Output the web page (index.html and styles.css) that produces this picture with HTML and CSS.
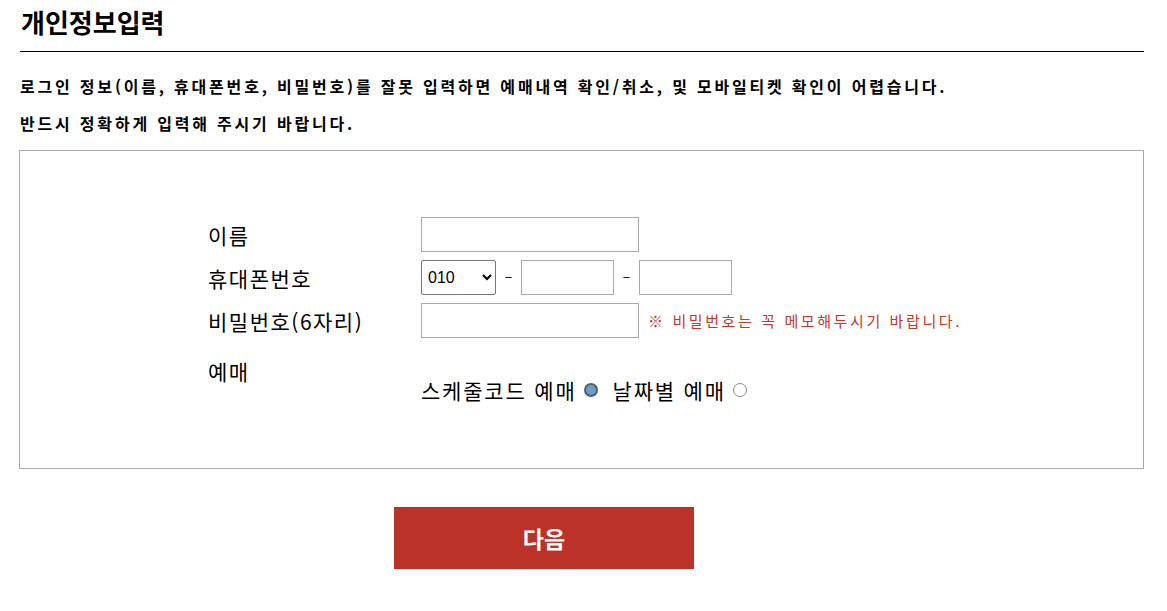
FILE: index.html
```html
<!DOCTYPE html>
<html lang="ko">
<head>
<meta charset="utf-8">
<title>개인정보입력</title>
<link rel="stylesheet" href="styles.css">
</head>
<body>
<div class="wrap">
  <h1 class="title">개인정보입력</h1>
  <div class="info">
    <p>로그인 정보(이름, 휴대폰번호, 비밀번호)를 잘못 입력하면 예매내역 확인/취소, 및 모바일티켓 확인이 어렵습니다.</p>
    <p>반드시 정확하게 입력해 주시기 바랍니다.</p>
  </div>
  <div class="formbox">
    <div class="row">
      <div class="label">이름</div>
      <div class="field"><input class="txt wide" type="text"></div>
    </div>
    <div class="row">
      <div class="label">휴대폰번호</div>
      <div class="field">
        <select class="sel"><option>010</option><option>011</option><option>016</option><option>017</option><option>018</option><option>019</option></select>
        <span class="dash">–</span>
        <input class="txt short" type="text">
        <span class="dash">–</span>
        <input class="txt short" type="text">
      </div>
    </div>
    <div class="row">
      <div class="label">비밀번호(6자리)</div>
      <div class="field"><input class="txt wide" type="password"><span class="note">※ 비밀번호는 꼭 메모해두시기 바랍니다.</span></div>
    </div>
    <div class="row row-radio">
      <div class="label">예매</div>
      <div class="field radios">
        <label class="opt">스케줄코드 예매<input class="radio" type="radio" name="mode" checked></label>
        <label class="opt">날짜별 예매<input class="radio" type="radio" name="mode"></label>
      </div>
    </div>
  </div>
  <div class="actions"><button class="next" type="button">다음</button></div>
</div>
</body>
</html>
```

FILE: styles.css
```css
body {
  margin: 0;
  font-family: "Noto Sans CJK KR", "Noto Sans", sans-serif;
  color: #000;
  background: #fff;
}
.wrap {
  margin-left: 19px;
  width: 1125px;
}
.title {
  margin: 0 0 0 1px;
  padding: 6px 1px 14px;
  font-size: 26px;
  line-height: 31px;
  font-weight: 700;
  border-bottom: 1px solid #000;
}
.info {
  margin-top: 16px;
  margin-bottom: 8px;
  padding-left: 1px;
}
.info p {
  margin: 0;
  font-size: 16px;
  line-height: 37px;
  font-weight: 700;
  letter-spacing: 2.8px;
}
.formbox {
  border: 1px solid #aaa;
  padding-top: 66px;
  box-sizing: border-box;
  height: 319px;
}
.row {
  display: flex;
  align-items: center;
  height: 35px;
  margin-bottom: 8px;
  padding-left: 188px;
}
.label {
  width: 213px;
  font-size: 21px;
  letter-spacing: 1.5px;
  line-height: 24px;
}
.field {
  display: flex;
  align-items: center;
}
.txt {
  border: 1px solid #a9a9a9;
  height: 35px;
  box-sizing: border-box;
  padding: 0 6px;
  font-size: 16px;
  outline: none;
  margin: 0;
}
.wide { width: 218px; }
.short { width: 93px; }
.sel {
  width: 75px;
  height: 35px;
  box-sizing: border-box;
  font-size: 16px;
  font-family: "Liberation Sans", sans-serif;
  border: 1px solid #767676;
  border-radius: 2px;
  background: #fff;
  padding: 0 2px;
  margin: 0;
  color: #000;
}
.dash {
  width: 25px;
  text-align: center;
  font-size: 14px;
  margin-top: -6px;
}
.note {
  margin-left: 9px;
  color: #c0392b;
  font-size: 15px;
  letter-spacing: 2.6px;
}
.row-radio {
  align-items: flex-start;
  height: auto;
  margin-top: 21px;
}
.radios {
  padding-top: 19px;
}
.opt {
  display: inline-flex;
  align-items: center;
  font-size: 21px;
  line-height: 24px;
  letter-spacing: 1.8px;
  margin-right: 15px;
}
.radio {
  appearance: none;
  -webkit-appearance: none;
  width: 14px;
  height: 14px;
  margin: 0 0 0 7px;
  border-radius: 50%;
  border: 1px solid #8a8a8a;
  background: #fff;
  box-sizing: border-box;
}
.radio:checked {
  border: 2px solid #4f5f6c;
  background: #6c9dc6;
}
.actions {
  margin-top: 38px;
  padding-left: 375px;
}
.next {
  width: 300px;
  height: 62px;
  border: 0;
  background: #bb3328;
  color: #fff;
  font-family: "Noto Sans CJK KR", sans-serif;
  font-size: 23px;
  font-weight: 700;
  cursor: pointer;
}
```
